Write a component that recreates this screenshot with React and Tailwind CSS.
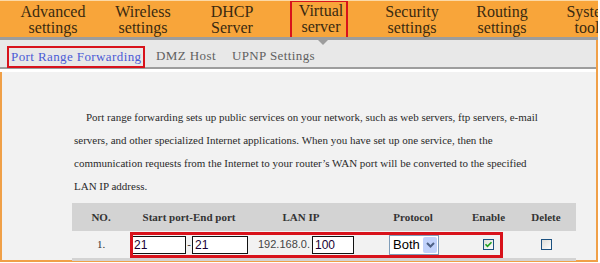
import React from "react";

const navItems = [
  { top: "Advanced", bottom: "settings", w: "w-[106px]" },
  { top: "Wireless", bottom: "settings", w: "w-[74px]" },
  { top: "DHCP", bottom: "Server", w: "w-[104px]" },
];

const navRight = [
  { top: "Security", bottom: "settings", w: "w-[128px]" },
  { top: "Routing", bottom: "settings", w: "w-[52px]" },
  { top: "System", bottom: "tools", w: "w-[124px]" },
];

const NavItem = ({ top, bottom, w }) => (
  <div className={`${w} shrink-0 text-center pt-[3px]`}>
    <div>{top}</div>
    <div>{bottom}</div>
  </div>
);

const CheckBox = ({ checked }) => (
  <svg width="11" height="11" viewBox="0 0 11 11">
    <defs>
      <linearGradient id="cbg" x1="0" y1="0" x2="1" y2="1">
        <stop offset="0" stopColor="#dcdcd6" />
        <stop offset="1" stopColor="#ffffff" />
      </linearGradient>
    </defs>
    <rect x="0.5" y="0.5" width="10" height="10" fill="url(#cbg)" stroke="#1c5180" />
    {checked && <path d="M2.5 5.2 L4.5 7.3 L8.5 3.2" fill="none" stroke="#21a121" strokeWidth="1.6" />}
  </svg>
);

const TextBox = ({ value, w }) => (
  <div className={`${w} h-[18px] shrink-0 border border-[#111] bg-white pl-[2px] text-[12px] leading-[16px] text-[#1a0033] font-[family-name:Liberation_Sans,Arial,sans-serif]`}>
    {value}
  </div>
);

export default function App() {
  return (
    <div className="w-[600px] h-[263px] overflow-hidden bg-white font-serif text-[#333]">
      <div className="w-[598px] relative font-[family-name:Liberation_Serif,Times_New_Roman,serif]">
        {/* top menu */}
        <div className="h-[37px] bg-[#f8a53a] border-t border-[#fcd9a6] flex text-[16px] leading-[16px] text-[#3a2a10] overflow-hidden">
          {navItems.map((n) => (
            <NavItem key={n.top} {...n} />
          ))}
          <div className="w-[6px] shrink-0" />
          <div className="w-[58px] h-[41px] shrink-0 border-2 border-[#d8121b] text-center pl-[4px] pt-[1px] -mt-px relative z-10">
            <div>Virtual</div>
            <div>server</div>
          </div>
          {navRight.map((n) => (
            <NavItem key={n.top} {...n} />
          ))}
        </div>
        <div className="h-[3px] bg-[#9d9d9d]" />
        <div className="absolute left-[318px] top-[40px] w-0 h-0 border-l-[5px] border-r-[5px] border-t-[5px] border-l-transparent border-r-transparent border-t-[#9d9d9d] z-20" />

        {/* sub menu */}
        <div className="h-[27px] bg-[#e8e8e8] border-r-2 border-[#f0a048] flex items-end text-[13px] tracking-[0.4px] text-[#606060]">
          <div className="ml-[7px] h-[22px] w-[138px] border-2 border-[#d8121b] text-[#4b5bd6] pl-[2px] leading-[18px] -mb-[1px] relative z-10 whitespace-nowrap">
            Port Range Forwarding
          </div>
          <div className="ml-[11px] leading-[18px] mb-[2px]">DMZ Host</div>
          <div className="ml-[16px] leading-[18px] mb-[2px]">UPNP Settings</div>
        </div>
        <div className="h-[2px] bg-[#9d9d9d] border-r-2 border-[#f0a048]" />
        <div className="h-[3px] bg-white border-r-2 border-[#f0a048]" />

        {/* content */}
        <div className="h-[190px] bg-[#f2f2f2] border-l-2 border-r-2 border-b-2 border-[#f0a048] pt-[34px]">
          <div className="ml-[72px] text-[11px] leading-[23px] text-[#2a2a2a] whitespace-nowrap">
            <div className="pl-[12px]">
              Port range forwarding sets up public services on your network, such as web servers, ftp servers, e-mail
            </div>
            <div>
              servers, and other specialized Internet applications. When you have set up one service, then the
            </div>
            <div>
              communication requests from the Internet to your router’s WAN port will be converted to the specified
            </div>
            <div>LAN IP address.</div>
          </div>

          <div className="ml-[70px] mt-[5px] w-[504px] text-[11px]">
            <div className="grid grid-cols-[58px_118px_106px_118px_32px_72px] h-[28px] items-center bg-[#d3d3d3] font-bold text-[#333] text-center">
              <div>NO.</div>
              <div>Start port-End port</div>
              <div>LAN IP</div>
              <div>Protocol</div>
              <div>Enable</div>
              <div className="pl-3">Delete</div>
            </div>
            <div className="relative grid grid-cols-[58px_118px_106px_118px_32px_72px] h-[30px] items-center border-b-[3px] border-[#d3d3d3] text-[#333]">
              <div className="text-center">1.</div>
              <div className="flex items-center pl-px">
                <TextBox value="21" w="w-[55px]" />
                <span className="w-[6px] text-center text-[11px] font-[family-name:Liberation_Sans,Arial,sans-serif]">-</span>
                <TextBox value="21" w="w-[56px]" />
              </div>
              <div className="flex items-center pl-[10px] font-[family-name:Liberation_Sans,Arial,sans-serif] text-[11px] text-[#444]">
                <span className="w-[55px]">192.168.0.</span>
                <TextBox value="100" w="w-[42px]" />
              </div>
              <div className="pl-[35px]">
                <div className="w-[50px] h-[20px] border border-[#7f9db9] bg-white flex items-center justify-between font-[family-name:Liberation_Sans,Arial,sans-serif] text-[13px] text-black">
                  <span className="pl-[3px]">Both</span>
                  <span className="w-[14px] h-[16px] mr-px rounded-[2px] bg-[#c1d2fb] flex items-center justify-center">
                    <svg width="9" height="6" viewBox="0 0 9 6">
                      <path d="M1 1 L4.5 4.5 L8 1" fill="none" stroke="#4d6185" strokeWidth="2" />
                    </svg>
                  </span>
                </div>
              </div>
              <div className="flex justify-center">
                <CheckBox checked />
              </div>
              <div className="flex justify-center pl-3">
                <CheckBox />
              </div>
              <div className="absolute left-[58px] top-[1px] w-[373px] h-[26px] border-[3px] border-[#d8121b] pointer-events-none" />
            </div>
          </div>
        </div>
      </div>
    </div>
  );
}
